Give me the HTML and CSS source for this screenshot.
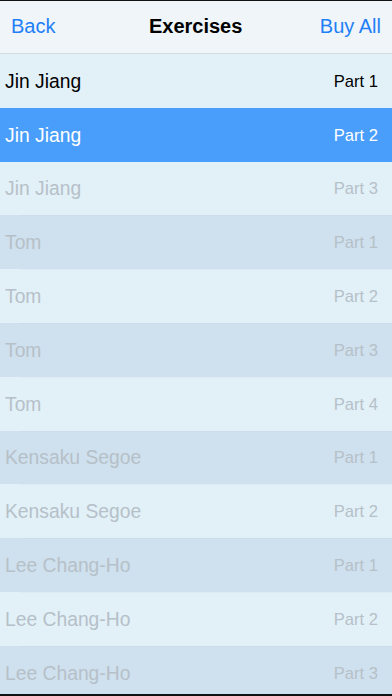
FILE: index.html
```html
<!DOCTYPE html>
<html>
<head>
<meta charset="utf-8">
<link rel="stylesheet" href="styles.css">
</head>
<body>
<div class="screen">
  <header class="nav">
    <span class="nav-btn">Back</span>
    <span class="nav-title">Exercises</span>
    <span class="nav-btn">Buy All</span>
  </header>
  <ul class="list">
    <li class="row light active"><span class="name">Jin Jiang</span><span class="part">Part 1</span></li>
    <li class="row selected"><span class="name">Jin Jiang</span><span class="part">Part 2</span></li>
    <li class="row light"><span class="name">Jin Jiang</span><span class="part">Part 3</span></li>
    <li class="row dark"><span class="name">Tom</span><span class="part">Part 1</span></li>
    <li class="row light"><span class="name">Tom</span><span class="part">Part 2</span></li>
    <li class="row dark"><span class="name">Tom</span><span class="part">Part 3</span></li>
    <li class="row light"><span class="name">Tom</span><span class="part">Part 4</span></li>
    <li class="row dark"><span class="name">Kensaku Segoe</span><span class="part">Part 1</span></li>
    <li class="row light"><span class="name">Kensaku Segoe</span><span class="part">Part 2</span></li>
    <li class="row dark"><span class="name">Lee Chang-Ho</span><span class="part">Part 1</span></li>
    <li class="row light"><span class="name">Lee Chang-Ho</span><span class="part">Part 2</span></li>
    <li class="row dark"><span class="name">Lee Chang-Ho</span><span class="part">Part 3</span></li>
  </ul>
</div>
</body>
</html>
```
FILE: styles.css
```css
html, body {
  margin: 0;
  padding: 0;
  background: #000;
}
body {
  font-family: "Liberation Sans", Arial, sans-serif;
}
.screen {
  width: 392px;
  height: 696px;
  box-sizing: border-box;
  border-top: 1px solid #111;
  border-bottom: 2px solid #111;
  overflow: hidden;
  display: flex;
  flex-direction: column;
  background: #e2f1f8;
}
.nav {
  flex: 0 0 auto;
  border-bottom: 1px solid #d6dbdf;
  background: #eff5f9;
  display: flex;
  align-items: center;
  justify-content: space-between;
  padding: 0 11px 1px 11px;
  box-sizing: content-box;
  height: 51px;
}
.nav-btn {
  color: #1f80f6;
  font-size: 20px;
}
.nav-title {
  font-weight: bold;
  font-size: 20px;
  color: #000;
  margin-left: 16px;
}
.list {
  list-style: none;
  margin: 0;
  padding: 0;
  flex: 1 1 auto;
}
.row {
  position: relative;
  height: 53.8px;
  display: flex;
  align-items: center;
  justify-content: space-between;
  padding: 2px 14px 0 5px;
  box-sizing: border-box;
  color: #b6c0c8;
}
.row::before {
  content: "";
  position: absolute;
  left: 20px;
  right: 0;
  top: 0;
  height: 1px;
  background: rgba(150, 170, 190, 0.06);
}
.row.light { background: #e2f1f8; }
.row.dark { background: #cfe0ee; }
.row.selected { background: #4a9efb; color: #fff; }
.row.selected::before, .row.selected + .row::before { display: none; }
.row.active { color: #000; }
.row.active::before { display: none; }
.name {
  font-size: 19.3px;
}
.part {
  font-size: 16.6px;
}
```
